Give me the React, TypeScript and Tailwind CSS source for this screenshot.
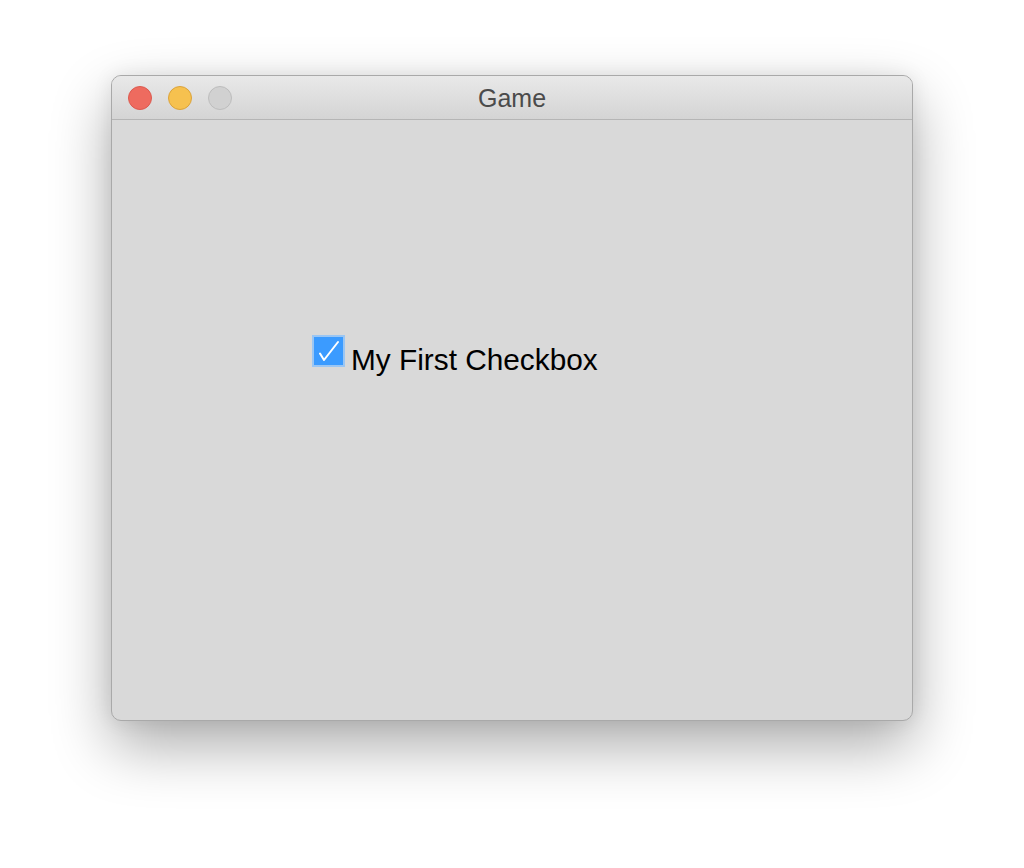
export default function App() {
    return (
        <div className="min-h-[868px] w-[1024px] bg-white pl-[111px] pt-[75px]" style={{ fontFamily: '"Liberation Sans", Arial, sans-serif' }}>
            {/* Window */}
            <div className="flex h-[646px] w-[802px] flex-col overflow-hidden rounded-[10px] border border-[#a9a9a9] bg-[#d9d9d9] shadow-[0_25px_60px_rgba(0,0,0,0.33),0_0_20px_rgba(0,0,0,0.08)]">
                {/* Title bar */}
                <div className="relative flex h-[44px] shrink-0 items-center border-b border-[#b5b5b5] bg-gradient-to-b from-[#e9e9e9] to-[#d4d4d4] px-[16px] pt-[1px]">
                    <div className="flex gap-[16px]">
                        <span className="h-[24px] w-[24px] rounded-full border border-[#dc5a4f] bg-[#ee6b5f]" />
                        <span className="h-[24px] w-[24px] rounded-full border border-[#dba33b] bg-[#f6c14f]" />
                        <span className="h-[24px] w-[24px] rounded-full border border-[#bdbdbd] bg-[#d1d1d1]" />
                    </div>
                    <div className="absolute inset-0 flex items-center justify-center pt-[2px] text-[25px] text-[#4b4b4b]">
                        Game
                    </div>
                </div>

                {/* Content */}
                <div className="flex flex-1 items-start pl-[200px] pt-[215px]">
                    <label className="flex items-start gap-[6px]">
                        <span className="flex h-[32px] w-[33px] items-center justify-center border-2 border-[#9ac6f4] bg-[#3b9bff]">
                            <svg width="33" height="32" viewBox="0 0 33 32" className="-m-[2px]">
                                <path d="M8 18.5 L12 25 L26 7" fill="none" stroke="white" strokeWidth="2" strokeLinecap="round" strokeLinejoin="round" />
                            </svg>
                        </span>
                        <span className="mt-[10px] text-[29.8px] leading-none text-black">My First Checkbox</span>
                    </label>
                </div>
            </div>
        </div>
    );
}
